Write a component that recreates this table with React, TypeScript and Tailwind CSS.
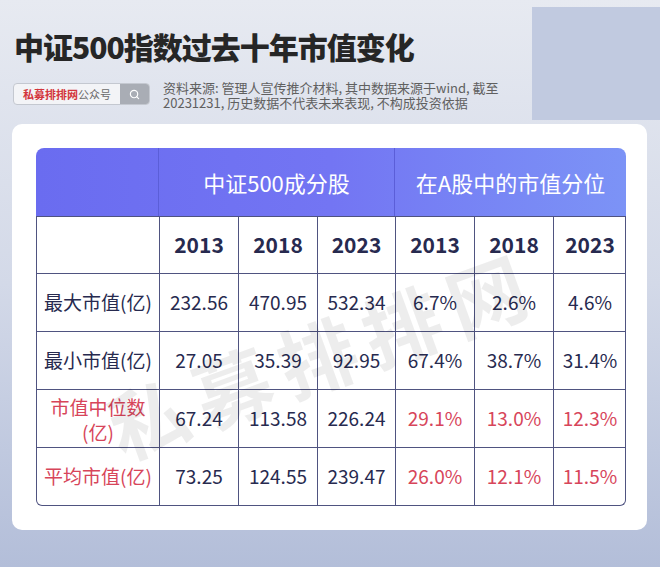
import React from 'react';
import { Search } from 'lucide-react';

const FONT = '"Noto Sans CJK SC", "Noto Sans", sans-serif';

type Row = {
  label: React.ReactNode;
  red?: boolean;
  values: string[];
  redPct?: boolean;
};

const rows: Row[] = [
  { label: '最大市值(亿)', values: ['232.56', '470.95', '532.34', '6.7%', '2.6%', '4.6%'] },
  { label: '最小市值(亿)', values: ['27.05', '35.39', '92.95', '67.4%', '38.7%', '31.4%'] },
  {
    label: (
      <span className="leading-[25px]">
        市值中位数
        <br />
        (亿)
      </span>
    ),
    red: true,
    redPct: true,
    values: ['67.24', '113.58', '226.24', '29.1%', '13.0%', '12.3%'],
  },
  { label: '平均市值(亿)', red: true, redPct: true, values: ['73.25', '124.55', '239.47', '26.0%', '12.1%', '11.5%'] },
];

const years = ['2013', '2018', '2023', '2013', '2018', '2023'];

const cols = 'grid grid-cols-[122px_79px_79px_78px_79px_79px_73px]';

export default function App() {
  return (
    <div
      className="relative w-[660px] h-[567px] overflow-hidden bg-gradient-to-b from-[#e7eaf1] via-[#d3d9e8] to-[#b3bed9]"
      style={{ fontFamily: FONT }}
    >
      {/* soft panel top right */}
      <div className="absolute left-[532px] top-[7px] right-0 h-[113px] bg-[#c1cae0]" />

      <div className="relative px-[12px] pt-[27px]">
        <h1 className="pl-[2px] text-[30px] leading-[38px] font-black text-[#262626] tracking-[-1px]">
          中证500指数过去十年市值变化
        </h1>

        <div className="mt-[18px] flex items-start">
          <div className="ml-[1px] flex h-[22px] w-[137px] overflow-hidden rounded-[4px] border border-[#c4c8d0] bg-[#f3f4f7]">
            <div className="flex flex-1 items-center pl-[9px] text-[11px] leading-none">
              <span className="font-bold text-[#d3353c]">私募排排网</span>
              <span className="text-[#6b6b6b]">公众号</span>
            </div>
            <div className="flex w-[29px] items-center justify-center bg-[#a9adb5]">
              <Search className="h-[11px] w-[11px] text-white" strokeWidth={2.5} />
            </div>
          </div>
          <p className="ml-[13px] -mt-[3px] text-[13px] leading-[15px] text-[#606060]">
            资料来源: 管理人宣传推介材料, 其中数据来源于wind, 截至
            <br />
            20231231, 历史数据不代表未来表现, 不构成投资依据
          </p>
        </div>

        <div className="relative mt-[14px] h-[406px] w-[635px] overflow-hidden rounded-[10px] bg-white px-[24px] pt-[24px]">
          <div className="w-[590px]">
            {/* header */}
            <div className="grid h-[68px] grid-cols-[122px_236px_232px] rounded-t-[8px] bg-gradient-to-r from-[#6a6cf0] via-[#7375f3] to-[#7c93f6] text-[22px] text-white">
              <div />
              <div className="flex items-center justify-center border-l border-[#5b5ed8]">中证500成分股</div>
              <div className="flex items-center justify-center border-l border-[#5b5ed8]">在A股中的市值分位</div>
            </div>

            <div className="overflow-hidden rounded-b-[6px] border-x border-b border-[#4f5380] text-[#272a4f]">
              <div className={`${cols} h-[57px] border-t border-[#4f5380]`}>
                <div />
                {years.map((y, i) => (
                  <div key={i} className="flex items-center justify-center border-l border-[#4f5380] text-[21px] font-bold">
                    {y}
                  </div>
                ))}
              </div>
              {rows.map((r, ri) => (
                <div key={ri} className={`${cols} h-[58px] border-t border-[#4f5380] text-[19px]`}>
                  <div className={`flex items-center justify-center text-center ${r.red ? 'text-[#d7455a]' : ''}`}>
                    {r.label}
                  </div>
                  {r.values.map((v, i) => (
                    <div
                      key={i}
                      className={`flex items-center justify-center border-l border-[#4f5380] ${
                        r.redPct && i >= 3 ? 'text-[#d7455a]' : ''
                      }`}
                    >
                      {v}
                    </div>
                  ))}
                </div>
              ))}
            </div>
          </div>

          {/* watermark */}
          <div className="pointer-events-none absolute left-[85px] top-[170px] -rotate-[20deg] select-none text-[78px] font-bold tracking-[12px] text-black/[0.07]">
            私募排排网
          </div>
        </div>
      </div>
    </div>
  );
}
